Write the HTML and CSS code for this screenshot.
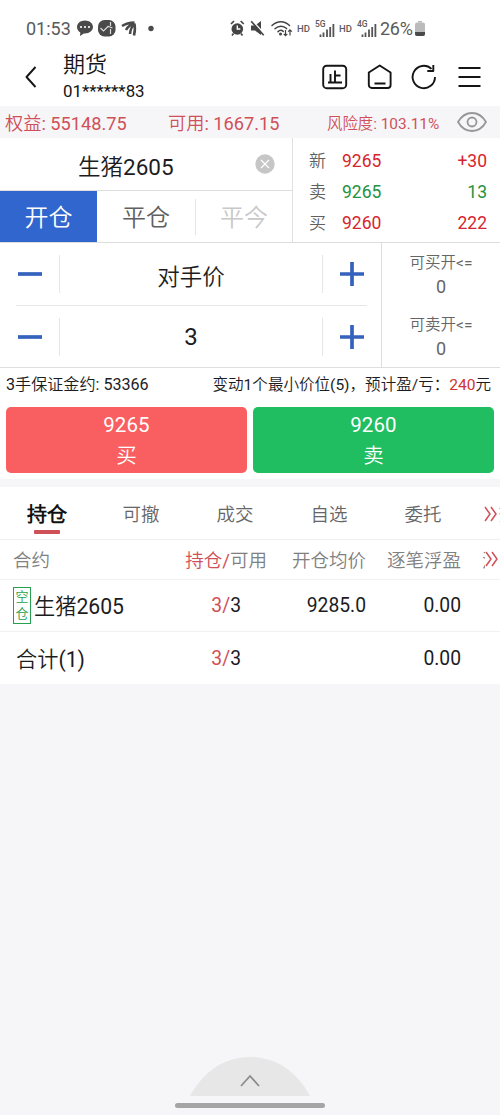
FILE: index.html
```html
<!DOCTYPE html>
<html lang="zh-CN">
<head>
<meta charset="utf-8">
<title>期货</title>
<link rel="stylesheet" href="styles.css">
</head>
<body>
<div class="app">
  <div class="status">
    <span class="clock">01:53</span>
    <svg class="st-left" width="80" height="20" viewBox="0 0 80 20">
      <g fill="#4a4a4a">
        <path d="M8 2.500C3.500 2.500 0 5.300 0 9c0 2.500 1.400 4.300 3.300 5.500L3 18l3.800-2.600H8c4.500 0 8-2.800 8-6.400S12.500 2.500 8 2.500z"/>
        <rect x="21" y="2" width="17.500" height="16.500" rx="6.500"/>
        <circle cx="74" cy="10.500" r="2.700"/>
      </g>
      <g fill="none" stroke="#4a4a4a" stroke-width="2.600"><path d="M45 8c4-2.600 7.500-3.300 12.500-3.500M49 12c2-3.800 5-5.800 8.500-6.500M53 16c.2-4 2-8 5-10"/><path d="M57 17.500c1-4 1.300-8 .3-12"/></g>
      <g fill="#fff"><circle cx="4" cy="9" r="1.100"/><circle cx="8" cy="9" r="1.100"/><circle cx="12" cy="9" r="1.100"/></g>
      <path d="M23.500 10l3 3 5-5M33.500 4v4M33.500 11v5M31.500 8.500l4 1.500" stroke="#ddd" stroke-width="1.200" fill="none"/>
    </svg>
    <svg class="st-right" width="66" height="20" viewBox="0 0 66 20">
      <circle cx="7.300" cy="11" r="5.800" fill="#444"/>
      <path d="M1 6l3-3M13.700 6l-3-3M3.500 15.500L2 17.500M11 15.500l1.500 2" stroke="#444" stroke-width="1.700"/>
      <path d="M7.300 7.500V11h3" stroke="#fff" stroke-width="1.400" fill="none"/>
      <path d="M21 7.500h4l6-4.500v14l-6-4.500h-4z" fill="#444"/>
      <path d="M22.300 2.500l12.500 14" stroke="#fff" stroke-width="1.500"/>
      <path d="M21.200 3.300l12.500 14" stroke="#444" stroke-width="1.700"/>
      <g fill="none" stroke="#444" stroke-width="1.500" stroke-linecap="round"><path d="M42 7.500c5.300-5 12.500-5 17.500 0M45 10.700c3.600-3.400 8.400-3.400 11.600-.1M48 13.600c1.600-1.600 3.700-1.600 5.200-.2"/></g>
      <circle cx="50.500" cy="16" r="1.500" fill="#444"/>
      <path d="M55.500 12v5.500M53.700 15.800l1.800 1.900 1.800-1.900M60 17.500V12M58.200 13.700L60 11.800l1.800 1.900" stroke="#444" stroke-width="1.200" fill="none"/>
    </svg>
    <span class="hd">HD</span>
    <span class="signal"><span class="gen">5G</span><svg width="16" height="15" viewBox="0 0 16 15"><path d="M1.500 12.500V15M4.500 10.500V15M8 7.500V15M11.200 5V15M14.400 2V15" stroke="#555" stroke-width="1.800"/></svg></span>
    <span class="hd">HD</span>
    <span class="signal"><span class="gen">4G</span><svg width="16" height="15" viewBox="0 0 16 15"><path d="M1.500 12.500V15M4.500 10.500V15M8 7.500V15M11.200 5V15M14.400 2V15" stroke="#555" stroke-width="1.800"/></svg></span>
    <span class="percent">26%</span>
    <svg class="battery" width="10" height="15" viewBox="0 0 10 15"><path d="M3 0h4v1.500H3z" fill="#bbb"/><rect y="1.500" width="10" height="13.500" rx="2" fill="#bbb"/><path d="M0 11h10v2a2 2 0 0 1-2 2H2a2 2 0 0 1-2-2z" fill="#4a4a4a"/></svg>
  </div>

  <header class="header">
    <svg class="back" width="12" height="22" viewBox="0 0 12 22"><path d="M10.500 1L1.500 11l9 10" class="ink"/></svg>
    <div class="heading">
      <h1>期货</h1>
      <p>01******83</p>
    </div>
    <svg width="26" height="26" viewBox="0 0 26 26"><g class="ink"><rect x="1.200" y="1.700" width="23" height="22.500" rx="3.500"/><path d="M13 6.500V18M13.500 11.500h5M8.500 10v8M6 18.500h14"/></g></svg>
    <svg width="26" height="26" viewBox="0 0 26 26"><g class="ink"><path d="M1.800 8.500L12.700 1.500l10.900 7V21a3 3 0 0 1-3 3H4.800a3 3 0 0 1-3-3zM7.500 19.500h11"/></g></svg>
    <svg width="26" height="26" viewBox="0 0 26 26"><g class="ink"><path d="M24 13A11.200 11.200 0 1 1 20.500 4.900M22.300 1v6h-6"/></g></svg>
    <svg width="26" height="26" viewBox="0 0 26 26"><path d="M2.500 4h22M2.500 13h22M2.500 22h22" class="ink"/></svg>
  </header>

  <div class="account">
    <span class="equity">权益: 55148.75</span>
    <span class="available">可用: 1667.15</span>
    <span class="risk">风险度: 103.11%</span>
    <svg width="30" height="20" viewBox="0 0 30 20"><g fill="none" stroke="#969699" stroke-width="1.800"><path d="M1 10C8-2 22-2 29 10 22 22 8 22 1 10z"/><circle cx="15" cy="10" r="4.500"/></g></svg>
  </div>

  <section class="top">
    <div class="contract-side">
      <div class="contract"><span>生猪2605</span>
        <svg width="20" height="20" viewBox="0 0 20 20"><circle cx="10" cy="10" r="9.700" fill="#c6c6c6"/><path d="M6 6l8 8M14 6l-8 8" stroke="#fff" stroke-width="1.200"/></svg>
      </div>
      <div class="modes"><span class="on">开仓</span><span>平仓</span><span class="off">平今</span></div>
    </div>
    <div class="quotes">
      <div class="quote up"><i>新</i><b>9265</b><em>+30</em></div>
      <div class="quote down"><i>卖</i><b>9265</b><em>13</em></div>
      <div class="quote up"><i>买</i><b>9260</b><em>222</em></div>
    </div>
  </section>

  <section class="order">
    <div class="steppers">
      <div class="stepper"><span class="step minus"><svg width="24" height="24" viewBox="0 0 24 24"><path d="M0 12h24"/></svg></span><span class="value">对手价</span><span class="step plus"><svg width="24" height="24" viewBox="0 0 24 24"><path d="M0 12h24M12 0v24"/></svg></span></div>
      <div class="stepper"><span class="step minus"><svg width="24" height="24" viewBox="0 0 24 24"><path d="M0 12h24"/></svg></span><span class="value number">3</span><span class="step plus"><svg width="24" height="24" viewBox="0 0 24 24"><path d="M0 12h24M12 0v24"/></svg></span></div>
    </div>
    <div class="limits">
      <div class="limit"><span>可买开&lt;=</span><b>0</b></div>
      <div class="limit"><span>可卖开&lt;=</span><b>0</b></div>
    </div>
  </section>

  <div class="hint"><span class="margin">3手保证金约: 53366</span><span>变动1个最小价位(5)，预计盈/亏：<b>240</b>元</span></div>

  <div class="actions">
    <div class="action buy"><span>9265</span><span>买</span></div>
    <div class="action sell"><span>9260</span><span>卖</span></div>
  </div>

  <section class="positions">
    <nav class="tabs"><span class="active">持仓</span><span>可撤</span><span>成交</span><span>自选</span><span>委托</span><span>查询</span>
      <svg class="more" width="14" height="16" viewBox="0 0 14 16"><path d="M1 1l5 7-5 7M7 1l5 7-5 7"/></svg>
    </nav>
    <div class="row head"><span class="name">合约</span><span class="qty"><b>持仓/</b>可用</span><span class="price">开仓均价</span><span class="profit">逐笔浮盈</span><span class="next">浮盈</span>
      <svg class="more" width="14" height="16" viewBox="0 0 14 16"><path d="M1 1l5 7-5 7M7 1l5 7-5 7"/></svg>
    </div>
    <div class="row"><span class="name"><span class="badge"><i>空</i><i>仓</i></span><span class="title">生猪2605</span></span><span class="qty"><b>3/</b>3</span><span class="price">9285.0</span><span class="profit">0.00</span></div>
    <div class="row total"><span class="name"><span class="title">合计(1)</span></span><span class="qty"><b>3/</b>3</span><span class="price"></span><span class="profit">0.00</span></div>
  </section>

  <footer class="drawer">
    <svg width="120" height="39" viewBox="0 0 120 39"><path d="M0 39C13 15 34 0 60 0s47 15 60 39z" fill="#e7e7e8"/><path d="M51 29l9-10 9 10" fill="none" stroke="#8c8c8c" stroke-width="1.800"/></svg>
    <div class="home-bar"></div>
  </footer>
</div>
</body>
</html>
```
FILE: styles.css
```css
* { box-sizing: border-box; }
body { margin: 0; font-family: Roboto, "Noto Sans CJK SC DemiLight", "Noto Sans CJK SC", sans-serif; color: #1c1c1e; background: #f6f6f8; }
h1, p { margin: 0; font-weight: 400; }
b, i, em { font-weight: 400; font-style: normal; }
svg { display: block; flex: none; }
.app { width: 500px; height: 1115px; display: flex; flex-direction: column; overflow: hidden; white-space: nowrap; }
.ink { fill: none; stroke: #151515; stroke-width: 1.9; stroke-linejoin: round; }

.status { height: 47px; padding: 9px 0 0 26px; display: flex; align-items: center; background: #fff; color: #5a5a5a; }
.clock { width: 51px; font-size: 18px; }
.st-right { margin-left: 73px; }
.hd { width: 19px; padding-left: 1px; font-size: 9.500px; font-weight: 500; }
.signal { width: 23px; height: 17px; display: flex; align-items: flex-end; }
.gen { width: 4px; min-width: 0; font-size: 8.500px; line-height: 9px; font-weight: 500; align-self: flex-start; }
.percent { width: 35px; font-size: 18px; letter-spacing: -0.300px; }

.header { height: 59px; padding: 0 18px 0 25px; display: flex; align-items: center; background: #fff; gap: 18.500px; }
.heading { width: 248px; padding-left: 7.500px; color: #151515; }
.heading h1 { font-size: 22px; line-height: 29px; }
.heading p { font-size: 16.900px; line-height: 25px; }

.account { height: 32px; padding-left: 5px; display: flex; align-items: center; font-size: 18.200px; color: #d05058; }
.equity { width: 163px; }
.available { width: 159px; }
.risk { width: 130px; font-size: 15.400px; }

.top { height: 105px; display: flex; background: #fff; border-bottom: 1px solid #dedede; }
.contract-side { width: 293px; border-right: 1px solid #e2e2e2; }
.contract { height: 53px; display: flex; align-items: center; padding-left: 78px; border-bottom: 1px solid #dedede; font-size: 22.500px; }
.contract span { width: 177px; padding-top: 1px; }
.modes { height: 51px; display: grid; grid-template-columns: 97px 98px 97px; align-items: center; text-align: center; font-size: 24px; color: #606060; }
.modes span { height: 51px; line-height: 55px; }
.modes .on { background: #3066cd; color: #fff; }
.modes .off { height: 36px; line-height: 39px; border-left: 1px solid #e4e4e4; color: #c8c8c8; }
.quotes { flex: 1; padding: 7px 13px 0 16px; }
.quote { height: 31px; display: flex; align-items: center; font-size: 17.500px; }
.quote i { width: 33px; padding-bottom: 2px; color: #606060; font-size: 17px; }
.quote em { margin-left: auto; }
.up { color: #d5262e; }
.down { color: #259244; }

.order { height: 125px; display: flex; background: #fff; border-bottom: 1px solid #dedede; }
.steppers { width: 382px; padding: 0 14px 0 16px; border-right: 1px solid #dedede; }
.stepper { height: 62px; display: flex; align-items: center; }
.stepper + .stepper { border-top: 1px solid #e6e6e6; }
.step { width: 45px; height: 38px; display: flex; align-items: center; }
.step svg { stroke: #3562bd; stroke-width: 3.700; }
.minus { width: 44px; padding-left: 2px; border-right: 1px solid #e6e6e6; }
.plus { border-left: 1px solid #e6e6e6; padding-left: 17px; }
.value { flex: 1; padding-top: 1px; text-align: center; font-size: 22.500px; }
.number { font-size: 24px; }
.limits { flex: 1; }
.limit { height: 62px; padding-top: 8px; display: flex; flex-direction: column; align-items: center; color: #666; font-size: 15.500px; line-height: 24px; }
.limit b { font-size: 18px; }

.hint { height: 32px; padding: 0 9px 2px 6px; display: flex; align-items: center; justify-content: space-between; background: #fff; font-size: 15.550px; }
.hint b { color: #cf3333; }
.margin { font-size: 16.100px; }
.actions { height: 79px; padding: 7px 6px 6px; display: flex; gap: 6px; background: #fff; }
.action { flex: 1; height: 66px; padding-top: 3px; border-radius: 5px; display: flex; flex-direction: column; align-items: center; color: #fff; font-size: 20.500px; line-height: 31px; letter-spacing: 0.100px; }
.buy { background: #f95f60; }
.sell { background: #20be61; }

.positions { margin-top: 8px; background: #fff; }
.tabs { position: relative; height: 53px; display: flex; overflow: hidden; border-bottom: 1px solid #efefef; font-size: 18.500px; color: #666; }
.tabs > span { flex: none; width: 94px; text-align: center; line-height: 56px; }
.tabs .active { position: relative; font-size: 20px; font-weight: 700; color: #111; }
.active::after { content: ""; position: absolute; left: 34px; top: 43px; width: 26px; height: 4px; border-radius: 1px; background: #d05058; }
.more { position: absolute; right: 2px; top: 19px; fill: none; stroke: #d05058; stroke-width: 1.500; }
.row { position: relative; height: 52px; display: grid; grid-template-columns: 163px 104px 99px 95px 40px; align-items: center; border-bottom: 1px solid #f1f1f1; font-size: 19.300px; overflow: hidden; }
.name { display: flex; align-items: center; padding-left: 13px; font-size: 21.200px; }
.title { padding-bottom: 2px; }
.badge { width: 18px; height: 37px; margin-right: 3px; border: 1px solid #259f50; display: flex; flex-direction: column; align-items: center; color: #259f50; font-size: 13px; line-height: 17px; }
.qty { text-align: right; padding-right: 26px; }
.price, .profit { text-align: right; }
.qty b { color: #d05058; }
.total { border: 0; }
.total .name { padding-left: 16px; }
.head { height: 40px; padding-bottom: 2px; font-size: 18.500px; color: #808080; }
.head .name { font-size: 18.500px; }
.head .qty { padding-right: 0; }
.head .next { width: 3px; margin-left: 21px; overflow: hidden; }
.head .more { top: 11px; right: 1px; }

.drawer { margin-top: auto; height: 58px; display: flex; flex-direction: column; align-items: center; }
.home-bar { width: 150px; height: 5px; margin-top: 7px; border-radius: 3px; background: #a5a5a5; }
```
